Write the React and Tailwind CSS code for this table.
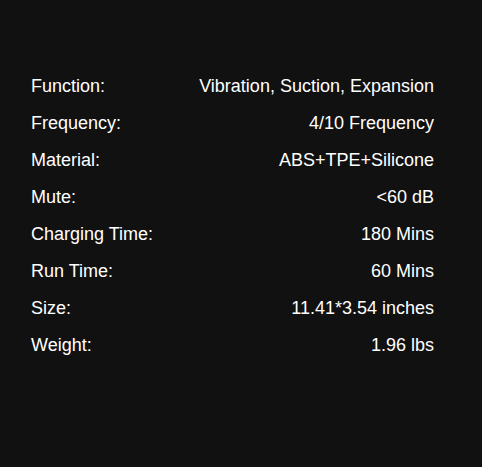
const specs = [
  ['Function:', 'Vibration, Suction, Expansion'],
  ['Frequency:', '4/10 Frequency'],
  ['Material:', 'ABS+TPE+Silicone'],
  ['Mute:', '<60 dB'],
  ['Charging Time:', '180 Mins'],
  ['Run Time:', '60 Mins'],
  ['Size:', '11.41*3.54 inches'],
  ['Weight:', '1.96 lbs'],
]

export default function App() {
  return (
    <div className="h-[467px] w-[482px] bg-[#111111] pl-[31px] pr-[48px] pt-[68px] font-['Liberation_Sans',Arial,sans-serif] text-white">
      {specs.map(([label, value]) => (
        <div key={label} className="flex h-[37px] items-center justify-between text-[18px]">
          <span>{label}</span>
          <span>{value}</span>
        </div>
      ))}
    </div>
  )
}
